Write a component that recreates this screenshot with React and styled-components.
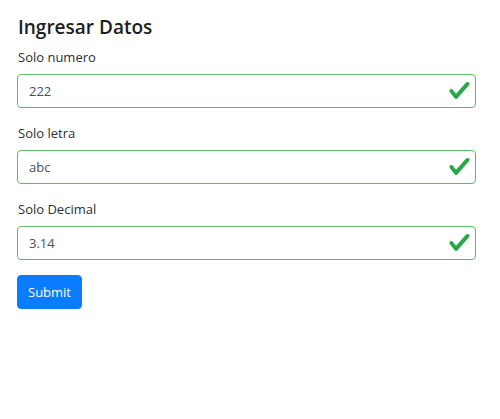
import React, { useState } from 'react'
import styled, { createGlobalStyle } from 'styled-components'

const GlobalStyle = createGlobalStyle`
  body {
    margin: 0;
    background: #ffffff;
    font-family: "Open Sans", "Noto Sans", sans-serif;
    color: #212529;
  }
`

const campos = [
  { id: 'numero', label: 'Solo numero', valor: '222' },
  { id: 'letra', label: 'Solo letra', valor: 'abc' },
  { id: 'decimal', label: 'Solo Decimal', valor: '3.14' },
]

export default function App() {
  const [valores, setValores] = useState(
    Object.fromEntries(campos.map((c) => [c.id, c.valor]))
  )

  return (
    <Container>
      <GlobalStyle />
      <Titulo>Ingresar Datos</Titulo>
      <form onSubmit={(e) => e.preventDefault()}>
        {campos.map((c) => (
          <Grupo key={c.id}>
            <Label htmlFor={c.id}>{c.label}</Label>
            <WrapperInput>
              <Input
                id={c.id}
                type="text"
                value={valores[c.id]}
                onChange={(e) => setValores({ ...valores, [c.id]: e.target.value })}
              />
              <Check viewBox="0 0 8 8">
                <path d="M2.3 6.73L.6 4.53c-.4-1.04.46-1.4 1.1-.8l1.1 1.4 3.4-3.8c.6-.63 1.6-.27 1.2.7l-4 4.6c-.43.5-.8.4-1.1.1z" />
              </Check>
            </WrapperInput>
          </Grupo>
        ))}
        <Boton type="submit">Submit</Boton>
      </form>
    </Container>
  )
}

const Container = styled.div`
  width: 459px;
  padding: 15px 17px;
`
const Titulo = styled.h1`
  margin: 0 0 8px 1px;
  font-size: 19px;
  font-weight: 600;
  line-height: 24px;
  color: #1b1e21;
`
const Grupo = styled.div`
  margin-bottom: 15px;
`
const Label = styled.label`
  display: block;
  margin: 0 0 6px 1px;
  font-size: 13px;
  line-height: 21px;
  color: #2b2f33;
`
const WrapperInput = styled.div`
  position: relative;
`
const Input = styled.input`
  box-sizing: border-box;
  width: 100%;
  height: 34px;
  padding: 4px 36px 4px 11px;
  font-family: inherit;
  font-size: 13px;
  color: #495057;
  border: 1px solid #5fb968;
  border-radius: 4px;
  outline: none;
`
const Check = styled.svg`
  position: absolute;
  right: 5px;
  top: 5px;
  width: 23px;
  height: 23px;
  fill: #28a745;
`
const Boton = styled.button`
  height: 34px;
  padding: 0 10px;
  font-family: inherit;
  font-size: 13px;
  color: #ffffff;
  background-color: #0a7cff;
  border: 1px solid #0a7cff;
  border-radius: 4px;
  cursor: pointer;
`
